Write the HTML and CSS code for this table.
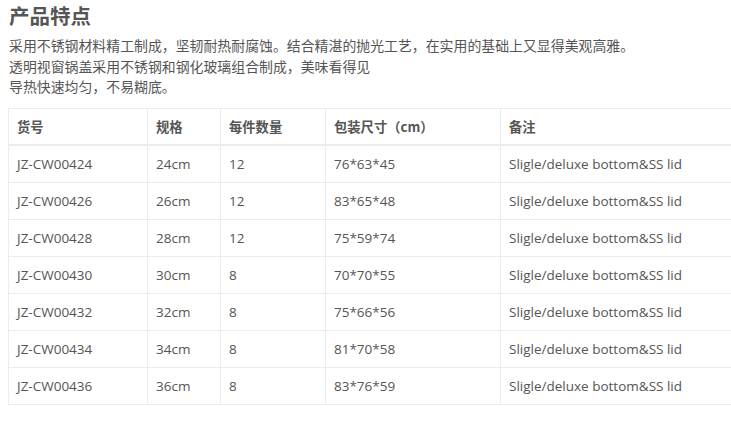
FILE: index.html
```html
<!DOCTYPE html>
<html lang="zh-CN">
<head>
<meta charset="utf-8">
<title>产品特点</title>
<link rel="stylesheet" href="styles.css">
</head>
<body>
<div class="page">
  <h2 class="title">产品特点</h2>
  <div class="desc">
    <p>采用不锈钢材料精工制成，坚韧耐热耐腐蚀。结合精湛的抛光工艺，在实用的基础上又显得美观高雅。</p>
    <p>透明视窗锅盖采用不锈钢和钢化玻璃组合制成，美味看得见</p>
    <p>导热快速均匀，不易糊底。</p>
  </div>
  <table class="spec">
    <colgroup>
      <col class="c1"><col class="c2"><col class="c3"><col class="c4"><col class="c5">
    </colgroup>
    <thead>
      <tr><th>货号</th><th>规格</th><th>每件数量</th><th>包装尺寸（cm）</th><th>备注</th></tr>
    </thead>
    <tbody>
      <tr><td>JZ-CW00424</td><td>24cm</td><td>12</td><td>76*63*45</td><td>Sligle/deluxe bottom&amp;SS lid</td></tr>
      <tr><td>JZ-CW00426</td><td>26cm</td><td>12</td><td>83*65*48</td><td>Sligle/deluxe bottom&amp;SS lid</td></tr>
      <tr><td>JZ-CW00428</td><td>28cm</td><td>12</td><td>75*59*74</td><td>Sligle/deluxe bottom&amp;SS lid</td></tr>
      <tr><td>JZ-CW00430</td><td>30cm</td><td>8</td><td>70*70*55</td><td>Sligle/deluxe bottom&amp;SS lid</td></tr>
      <tr><td>JZ-CW00432</td><td>32cm</td><td>8</td><td>75*66*56</td><td>Sligle/deluxe bottom&amp;SS lid</td></tr>
      <tr><td>JZ-CW00434</td><td>34cm</td><td>8</td><td>81*70*58</td><td>Sligle/deluxe bottom&amp;SS lid</td></tr>
      <tr><td>JZ-CW00436</td><td>36cm</td><td>8</td><td>83*76*59</td><td>Sligle/deluxe bottom&amp;SS lid</td></tr>
    </tbody>
  </table>
</div>
</body>
</html>
```

FILE: styles.css
```css
html, body {
  margin: 0;
  padding: 0;
  background: #fff;
  overflow: hidden;
}
body {
  font-family: "Open Sans", "Noto Sans CJK SC", sans-serif;
  color: #555;
  font-size: 13.3px;
}
.page {
  padding: 0 0 0 8px;
  width: 740px;
}
.title {
  margin: 0 0 0 1px;
  font-size: 20.5px;
  line-height: 30px;
  font-weight: bold;
  color: #555;
  font-family: "Noto Sans CJK SC", sans-serif;
}
.desc {
  margin: 5px 0 0 1px;
}
.desc p {
  margin: 0;
  font-size: 13.9px;
  line-height: 20.5px;
  font-family: "Noto Sans CJK SC", sans-serif;
}
.spec {
  margin-top: 11px;
  width: 740px;
  border-collapse: collapse;
  table-layout: fixed;
}
.c1 { width: 139px; }
.c2 { width: 73px; }
.c3 { width: 105px; }
.c4 { width: 175px; }
.spec th, .spec td {
  border: 1px solid #ececec;
  text-align: left;
  padding: 0 0 0 8px;
  height: 36px;
  white-space: nowrap;
}
.spec td {
  font-size: 13.5px;
}
.spec th {
  font-weight: bold;
  height: 35px;
  border-bottom: 2px solid #ececec;
  font-family: "Noto Sans CJK SC", sans-serif;
}
```
